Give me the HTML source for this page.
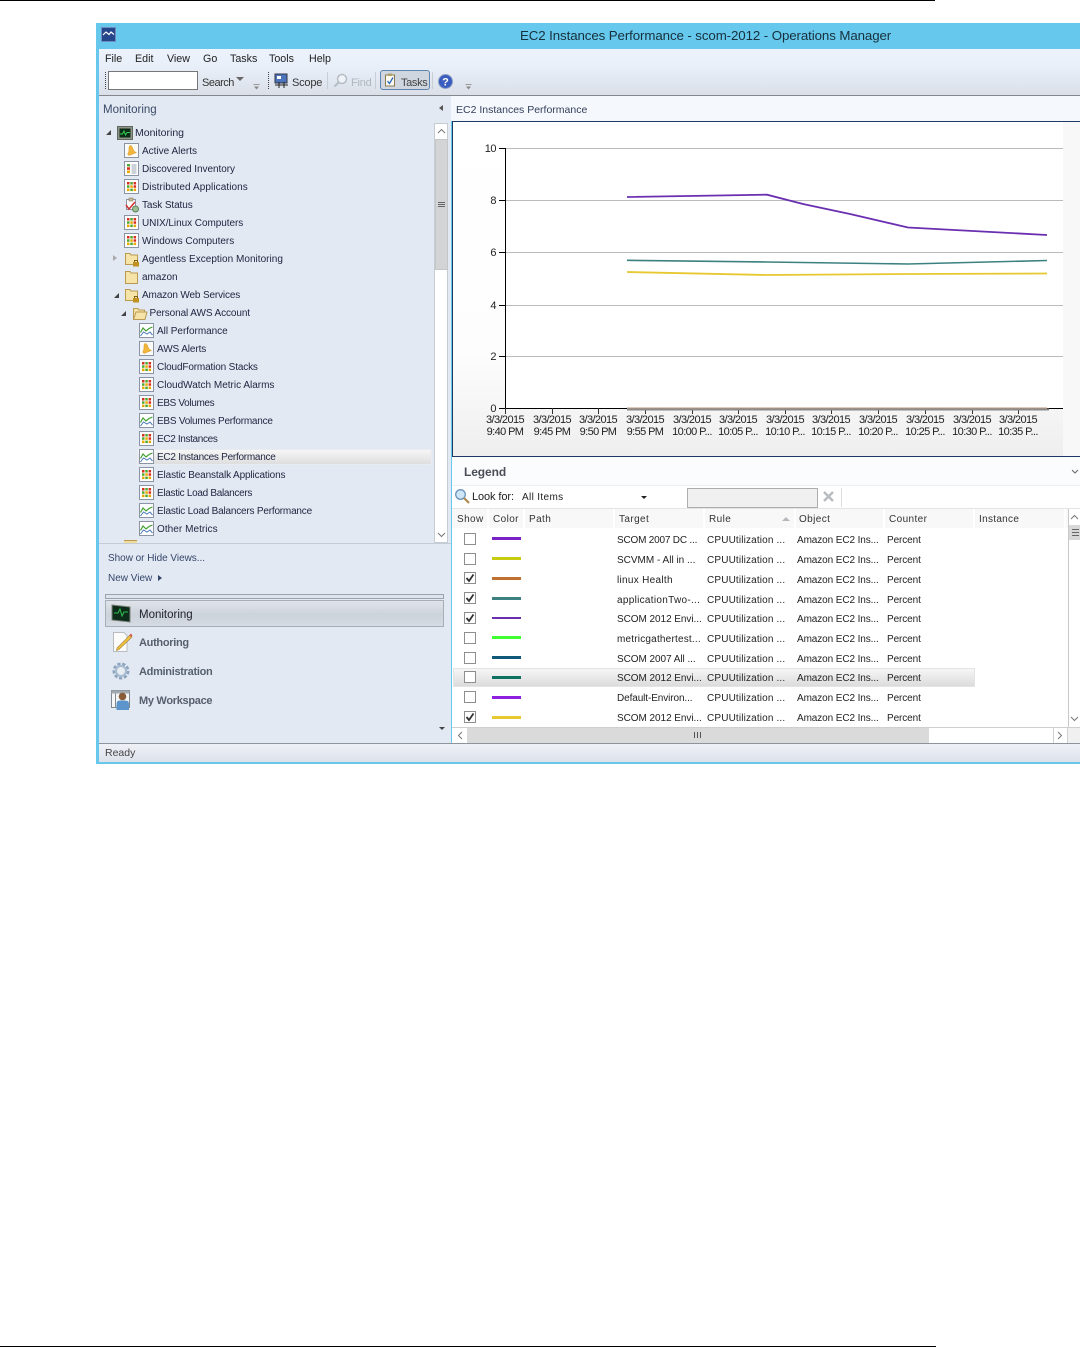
<!DOCTYPE html>
<html><head><meta charset="utf-8"><title>EC2 Instances Performance</title>
<style>
html,body{margin:0;padding:0;background:#fff}
body{position:relative;width:1080px;height:1347px;overflow:hidden;font-family:"Liberation Sans",sans-serif;font-size:10px;color:#1e2440}
div,span,svg.a{position:absolute}
.t{line-height:14px;height:14px;white-space:nowrap}
svg.i{position:absolute;width:16px;height:16px}
.m{color:#222;font-size:10.700px;top:52px;line-height:14px}
.h{top:513px;line-height:14px;color:#333;font-size:10px;letter-spacing:.4px}
.c{line-height:14px;white-space:nowrap;color:#222;font-size:10px}
.r{left:707px;letter-spacing:.15px}
.o{left:797px;letter-spacing:-.1px}
.p{left:887px;letter-spacing:-.1px}
.g{left:617px}
.cb{left:464px;width:10px;height:10px;border:1px solid #8e8e8e;background:#fff}
.sw{left:492px;width:29px;height:3px}
.hd{top:509px;height:19px;background:#f8f8f8}
.wb{left:139px;font-size:11px;font-weight:bold;color:#56606e;letter-spacing:-.3px}
</style></head><body>
<svg width="0" height="0" style="position:absolute"><defs>
<symbol id="grid" viewBox="0 0 16 16"><rect x=".5" y=".5" width="14" height="14" fill="#fff" stroke="#8a94a4"/><g fill="#e8a800"><rect x="3" y="3" width="2.500" height="2.500" fill="#d83020"/><rect x="6.300" y="3" width="2.500" height="2.500" fill="#50a830"/><rect x="9.600" y="3" width="2.500" height="2.500" fill="#d83020"/><rect x="3" y="6.300" width="2.500" height="2.500" fill="#50a830"/><rect x="6.300" y="6.300" width="2.500" height="2.500"/><rect x="9.600" y="6.300" width="2.500" height="2.500" fill="#d83020"/><rect x="3" y="9.600" width="2.500" height="2.500"/><rect x="6.300" y="9.600" width="2.500" height="2.500" fill="#50a830"/><rect x="9.600" y="9.600" width="2.500" height="2.500"/></g></symbol>
<symbol id="list" viewBox="0 0 16 16"><rect x=".5" y=".5" width="14" height="14" fill="#fff" stroke="#8a94a4"/><rect x="3" y="3" width="3" height="2.500" fill="#50a830"/><rect x="3" y="6.300" width="3" height="2.500" fill="#d83020"/><rect x="3" y="9.600" width="3" height="2.500" fill="#e8a800"/><path d="M7.500 4h5M7.500 6h5M7.500 8h5M7.500 10h5M7.500 12h5" stroke="#9aa4b4"/></symbol>
<symbol id="alert" viewBox="0 0 16 16"><rect x=".5" y=".5" width="14" height="14" fill="#fbfbf8" stroke="#8a94a4"/><path d="M6 2.500C7.500 2.500 8.500 4 9 6C9.500 8 11 9 12.500 9.500L5 12.500L3.500 11C5 9.500 5 7 5 5C5 3.500 5.300 2.800 6 2.500Z" fill="#f2b63c" stroke="#d89020" stroke-width=".5"/></symbol>
<symbol id="perf" viewBox="0 0 16 16"><rect x=".5" y=".5" width="14" height="14" fill="#fff" stroke="#8a94a4"/><path d="M1.500 9.500 L4 5 L7 8 L10 5.500 L13.500 4" fill="none" stroke="#40a030" stroke-width="1.200"/><path d="M1.500 13 L4.500 9 L8 11 L11 9 L13.500 12" fill="none" stroke="#4878b8"/></symbol>
<symbol id="folder" viewBox="0 0 16 16"><path d="M1.500 14.500V2.500H6L7 4H13.500V14.500Z" fill="#f6e3a8" stroke="#b89a50"/></symbol>
<symbol id="lock" viewBox="0 0 16 16"><path d="M1.500 13.500V2.500H6L7 4H13.500V13.500Z" fill="#f6e3a8" stroke="#b89a50"/><rect x="9" y="11" width="6" height="4.500" fill="#c09020"/><path d="M10.500 11V9.500H13.500V11" fill="none" stroke="#806010"/></symbol>
<symbol id="open" viewBox="0 0 16 16"><path d="M1.500 14.500V3.500H6L7 5H12.500V7H15L13 14.500Z" fill="#f6e3a8" stroke="#b89a50"/><path d="M1.500 14.500L4 7H15" fill="none" stroke="#b89a50"/></symbol>
<symbol id="task" viewBox="0 0 16 16"><rect x="2.500" y="2.500" width="9" height="10" fill="#fff" stroke="#8a94a4"/><rect x="5" y="1" width="4" height="3" fill="#c8b898" stroke="#807050" stroke-width=".5"/><path d="M2 8L5 12L11 5" fill="none" stroke="#d03030" stroke-width="1.500"/><circle cx="11.500" cy="12" r="3" fill="#9cc090" stroke="#608060"/></symbol>
<symbol id="mon" viewBox="0 0 16 16"><rect x=".5" y="1.500" width="15" height="13" fill="#8e9488" stroke="#606860"/><rect x="2.500" y="3.500" width="11" height="9" fill="#0c2c18"/><path d="M3 9H5.500L7 6L8.500 10L10 7.500H13" fill="none" stroke="#30d050"/></symbol>
<symbol id="more" viewBox="0 0 7 7"><path d="M.5 1.500H6.500" stroke="#999"/><path d="M1 3.500H6L3.500 6.500Z" fill="#888"/></symbol>
</defs></svg>

<!-- page rules -->
<div style="left:0;top:0;width:935px;height:1px;background:#000"></div>
<div style="left:0;top:1346px;width:936px;height:1px;background:#000"></div>

<!-- window -->
<div style="left:96px;top:23px;width:984px;height:741px;background:#66c8ec"></div>
<div style="left:99px;top:49px;width:981px;height:46px;background:linear-gradient(#edf3fc,#e9eff9 40%,#dadfe8)"></div>
<div style="left:99px;top:95px;width:981px;height:1px;background:#84888e"></div>

<!-- title -->
<svg class="a" style="left:101px;top:27px" width="15" height="15" viewBox="0 0 15 15"><rect width="15" height="15" fill="#26468c"/><rect x=".5" y=".5" width="14" height="14" fill="none" stroke="#6f8cc0"/><path d="M2 8L5 5L8 7.500L10 5L13 7.500" fill="none" stroke="#fff" stroke-width="1.200"/></svg>
<div class="t" style="left:520px;top:28px;line-height:16px;height:16px;font-size:13.300px;color:#16303c;letter-spacing:-.1px">EC2 Instances Performance - scom-2012 - Operations Manager</div>

<!-- menu -->
<div class="m" style="left:105px">File</div>
<div class="m" style="left:135px">Edit</div>
<div class="m" style="left:167px">View</div>
<div class="m" style="left:203px">Go</div>
<div class="m" style="left:230px">Tasks</div>
<div class="m" style="left:269px">Tools</div>
<div class="m" style="left:309px">Help</div>

<!-- toolbar -->
<div style="left:105px;top:72px;width:1px;height:17px;border-left:1px dotted #444"></div>
<div style="left:108px;top:71px;width:88px;height:17px;background:#fff;border:1px solid #777"></div>
<div class="t" style="left:202px;top:76px;font-size:11px;color:#333;letter-spacing:-.5px">Search</div>
<div style="left:236px;top:77px;border:4px solid transparent;border-top:4px solid #666;border-bottom:0"></div>
<svg class="a" style="left:253px;top:83px" width="7" height="7"><use href="#more"/></svg>
<div style="left:268px;top:72px;width:1px;height:17px;border-left:1px dotted #444"></div>
<svg class="a" style="left:274px;top:73px" width="15" height="15" viewBox="0 0 15 15"><rect x="1" y="1" width="12" height="9" fill="#4c74bc" stroke="#334"/><rect x="3" y="3" width="4" height="3" fill="#fff"/><path d="M1 12H14M5 9V15M10 9V15" stroke="#222"/></svg>
<div class="t" style="left:292px;top:76px;font-size:11px;color:#333;letter-spacing:-.2px">Scope</div>
<div style="left:327px;top:72px;width:1px;height:17px;background:#c8ced6"></div>
<svg class="a" style="left:333px;top:73px" width="15" height="15" viewBox="0 0 15 15"><circle cx="9" cy="6" r="4.500" fill="#f0f4f8" stroke="#b4bcc4" stroke-width="1.500"/><path d="M5.500 9.500L1.500 13.500" stroke="#b4bcc4" stroke-width="2"/></svg>
<div class="t" style="left:351px;top:76px;font-size:11px;color:#b0b6bc;letter-spacing:-.2px">Find</div>
<div style="left:375px;top:72px;width:1px;height:17px;background:#c8ced6"></div>
<div style="left:380px;top:70px;width:48px;height:18px;background:#cfd6df;border:1px solid #5f86ae;border-radius:3px"></div>
<svg class="a" style="left:384px;top:73px" width="13" height="14" viewBox="0 0 13 14"><rect x="1.500" y="2" width="9" height="11" fill="#fdfbf0" stroke="#8a7a50"/><rect x="4" y=".5" width="4" height="2.500" fill="#b0a070"/><path d="M3.500 8L5.500 10.500L9 4.500" fill="none" stroke="#2868c0" stroke-width="1.300"/></svg>
<div class="t" style="left:401px;top:76px;font-size:11px;color:#444;letter-spacing:-.35px">Tasks</div>
<div style="left:432px;top:72px;width:1px;height:17px;background:#c8ced6"></div>
<svg class="a" style="left:438px;top:74px" width="15" height="15" viewBox="0 0 15 15"><circle cx="7.500" cy="7.500" r="7" fill="#3a5cc0" stroke="#8ca0c0"/><text x="7.500" y="11.500" text-anchor="middle" font-size="11" font-weight="bold" fill="#fff" font-family="Liberation Sans">?</text></svg>
<svg class="a" style="left:465px;top:83px" width="7" height="7"><use href="#more"/></svg>

<!-- left pane -->
<div style="left:99px;top:96px;width:352px;height:647px;background:#e3e9f2"></div>
<div class="t" style="left:103px;top:103px;font-size:11.500px;color:#3a4a68">Monitoring</div>
<div style="left:439px;top:105px;border:3.500px solid transparent;border-right:4px solid #555;border-left:0"></div>
<!-- tree scrollbar -->
<div style="left:434px;top:123px;width:14px;height:420px;background:#fff;border:1px solid #c6ccd4;box-sizing:border-box"></div>
<div style="left:435px;top:139px;width:13px;height:131px;background:#d2d4d6;border:1px solid #c4c6c8;box-sizing:border-box"></div>
<div style="left:438px;top:202px;width:7px;height:5px;border-top:1px solid #666;border-bottom:1px solid #666;box-sizing:border-box"></div>
<div style="left:438px;top:204px;width:7px;height:1px;background:#666"></div>
<svg class="a" style="left:437px;top:128px" width="9" height="6"><path d="M1 5L4.500 1.500L8 5" fill="none" stroke="#777"/></svg>
<svg class="a" style="left:437px;top:532px" width="9" height="6"><path d="M1 1L4.500 4.500L8 1" fill="none" stroke="#777"/></svg>

<!-- tree -->
<div style="left:106px;top:130px;border-bottom:5px solid #444;border-left:5px solid transparent"></div>
<svg class="i" style="left:117px;top:125px"><use href="#mon"/></svg><div class="t" style="left:135px;top:126px;font-size:10.500px">Monitoring</div>
<svg class="i" style="left:124px;top:143px"><use href="#alert"/></svg><div class="t" style="left:142px;top:145px">Active Alerts</div>
<svg class="i" style="left:124px;top:161px"><use href="#list"/></svg><div class="t" style="left:142px;top:163px;letter-spacing:-.05px">Discovered Inventory</div>
<svg class="i" style="left:124px;top:179px"><use href="#grid"/></svg><div class="t" style="left:142px;top:181px;letter-spacing:.08px">Distributed Applications</div>
<svg class="i" style="left:124px;top:197px"><use href="#task"/></svg><div class="t" style="left:142px;top:199px;letter-spacing:-.1px">Task Status</div>
<svg class="i" style="left:124px;top:215px"><use href="#grid"/></svg><div class="t" style="left:142px;top:217px;letter-spacing:-.05px">UNIX/Linux Computers</div>
<svg class="i" style="left:124px;top:233px"><use href="#grid"/></svg><div class="t" style="left:142px;top:235px">Windows Computers</div>
<div style="left:113px;top:255px;border:3.500px solid transparent;border-left:4px solid #aaa;border-right:0"></div>
<svg class="i" style="left:124px;top:251px"><use href="#lock"/></svg><div class="t" style="left:142px;top:253px;letter-spacing:.03px">Agentless Exception Monitoring</div>
<svg class="i" style="left:124px;top:269px"><use href="#folder"/></svg><div class="t" style="left:142px;top:271px">amazon</div>
<div style="left:114px;top:293px;border-bottom:5px solid #444;border-left:5px solid transparent"></div>
<svg class="i" style="left:124px;top:287px"><use href="#lock"/></svg><div class="t" style="left:142px;top:289px;letter-spacing:-.15px">Amazon Web Services</div>
<div style="left:121px;top:311px;border-bottom:5px solid #444;border-left:5px solid transparent"></div>
<svg class="i" style="left:132px;top:305px"><use href="#open"/></svg><div class="t" style="left:149.500px;top:307px;letter-spacing:-.1px">Personal AWS Account</div>
<svg class="i" style="left:139px;top:323px"><use href="#perf"/></svg><div class="t" style="left:157px;top:325px;letter-spacing:-.03px">All Performance</div>
<svg class="i" style="left:139px;top:341px"><use href="#alert"/></svg><div class="t" style="left:157px;top:343px;letter-spacing:-.1px">AWS Alerts</div>
<svg class="i" style="left:139px;top:359px"><use href="#grid"/></svg><div class="t" style="left:157px;top:361px;letter-spacing:-.15px">CloudFormation Stacks</div>
<svg class="i" style="left:139px;top:377px"><use href="#grid"/></svg><div class="t" style="left:157px;top:379px">CloudWatch Metric Alarms</div>
<svg class="i" style="left:139px;top:395px"><use href="#grid"/></svg><div class="t" style="left:157px;top:397px;letter-spacing:-.35px">EBS Volumes</div>
<svg class="i" style="left:139px;top:413px"><use href="#perf"/></svg><div class="t" style="left:157px;top:415px;letter-spacing:-.24px">EBS Volumes Performance</div>
<svg class="i" style="left:139px;top:431px"><use href="#grid"/></svg><div class="t" style="left:157px;top:433px;letter-spacing:-.35px">EC2 Instances</div>
<div style="left:137px;top:449px;width:295px;height:16px;background:linear-gradient(#f6f6f6,#dedede);border:1px solid #e8ecf0;box-sizing:border-box;border-radius:2px"></div>
<svg class="i" style="left:139px;top:449px"><use href="#perf"/></svg><div class="t" style="left:157px;top:451px;letter-spacing:-.26px">EC2 Instances Performance</div>
<svg class="i" style="left:139px;top:467px"><use href="#grid"/></svg><div class="t" style="left:157px;top:469px;letter-spacing:-.13px">Elastic Beanstalk Applications</div>
<svg class="i" style="left:139px;top:485px"><use href="#grid"/></svg><div class="t" style="left:157px;top:487px;letter-spacing:-.3px">Elastic Load Balancers</div>
<svg class="i" style="left:139px;top:503px"><use href="#perf"/></svg><div class="t" style="left:157px;top:505px;letter-spacing:-.2px">Elastic Load Balancers Performance</div>
<svg class="i" style="left:139px;top:521px"><use href="#perf"/></svg><div class="t" style="left:157px;top:523px;letter-spacing:.05px">Other Metrics</div>
<div style="left:124px;top:540px;width:13px;height:3px;background:#f0dc9c;border-top:1px solid #b89a50;box-sizing:border-box"></div>

<div style="left:99px;top:543px;width:352px;height:1px;background:#c4ccd8"></div>
<div class="t" style="left:108px;top:552px;color:#34466c;letter-spacing:-.03px">Show or Hide Views...</div>
<div class="t" style="left:108px;top:572px;color:#34466c">New View</div>
<div style="left:158px;top:575px;border:3px solid transparent;border-left:4px solid #34466c;border-right:0"></div>

<!-- wunderbar -->
<div style="left:105px;top:594px;width:339px;height:5px;background:#dfe4ec;border:1px solid #9aa2ac;box-sizing:border-box"></div>
<div style="left:105px;top:600px;width:339px;height:27px;background:linear-gradient(#e0e4ea,#cdd3db 55%,#d6dbe3);border:1px solid #a6aeb8;box-sizing:border-box"></div>
<svg class="a" style="left:111px;top:604px" width="20" height="19" viewBox="0 0 20 19"><path d="M1 1L19 3V18L1 16Z" fill="#0d2c1a" stroke="#7a8278"/><path d="M3 9H7L9 5L11 12L13 8H17" fill="none" stroke="#30c050"/></svg>
<div class="t" style="left:139px;top:608px;font-size:11.500px;color:#20242c">Monitoring</div>
<svg class="a" style="left:111px;top:631px" width="22" height="22" viewBox="0 0 22 22"><path d="M2.500 1.500H13L16 4.500V20.500H2.500Z" fill="#fcfcfa" stroke="#b8bcc0"/><path d="M6 17L19 4L21 6L8 18.500L5.500 19.500Z" fill="#f0c040" stroke="#a08030" stroke-width=".6"/><path d="M18 4.500L20 2.500L21.500 4.500L20 6Z" fill="#d06050"/></svg>
<div class="t wb" style="top:636px">Authoring</div>
<svg class="a" style="left:111px;top:660px" width="20" height="22" viewBox="0 0 20 22"><circle cx="10" cy="11" r="6.500" fill="none" stroke="#8ea6c0" stroke-width="4" stroke-dasharray="3 1.500"/><circle cx="10" cy="11" r="5" fill="none" stroke="#a8bccf" stroke-width="2"/><circle cx="10" cy="11" r="3.200" fill="#e8edf3"/></svg>
<div class="t wb" style="top:665px">Administration</div>
<svg class="a" style="left:111px;top:689px" width="22" height="22" viewBox="0 0 22 22"><rect x=".5" y="1.500" width="18" height="17" fill="#f4f6f8" stroke="#808890"/><rect x=".5" y="1.500" width="18" height="3" fill="#a0a8b0"/><rect x="4" y="4.500" width="1" height="14" fill="#808890"/><circle cx="11.500" cy="7.500" r="3.800" fill="#8a5c38"/><path d="M5.500 21V15Q5.500 11.500 9 11.500H14Q18 11.500 18 15V21Z" fill="#5c94cc"/></svg>
<div class="t wb" style="top:694px">My Workspace</div>
<div style="left:439px;top:727px;border:3.500px solid transparent;border-top:3.500px solid #444;border-bottom:0"></div>

<!-- status -->
<div style="left:99px;top:743px;width:981px;height:19px;background:linear-gradient(#eef1f6,#dde2ea);border-top:1px solid #8f949a;box-sizing:border-box"></div>
<div class="t" style="left:105px;top:746px;font-size:10.500px;color:#444">Ready</div>

<!-- right header -->
<div style="left:451px;top:96px;width:629px;height:25px;background:#f5f8fc"></div>
<div class="t" style="left:456px;top:103px;font-size:10.500px;color:#34405c">EC2 Instances Performance</div>

<!-- chart -->
<svg class="a" style="left:452px;top:121px" width="628" height="336" viewBox="452 121 628 336" font-family="Liberation Sans" font-size="11" fill="#222">
<defs><linearGradient id="bg" x1="0" y1="0" x2="0" y2="1"><stop offset="0" stop-color="#fff"/><stop offset=".7" stop-color="#fdfdfd"/><stop offset="1" stop-color="#eeeeee"/></linearGradient></defs>
<rect x="452" y="121" width="628" height="336" fill="url(#bg)"/>
<rect x="1063" y="122" width="17" height="334" fill="#f8f8f8"/>
<rect x="505" y="135" width="558" height="273" fill="#fff"/>
<path d="M452.500 457V121.500H1080M452 456.500H1080" fill="none" stroke="#1d3a66"/>
<path d="M505 148.500H1063M505 200.500H1063M505 252.500H1063M505 305.500H1063M505 356.500H1063" stroke="#bbb"/>
<path d="M505.500 148V408M499 148.500H505M499 200.500H505M499 252.500H505M499 305.500H505M499 356.500H505M499 408.500H1063" stroke="#000" fill="none"/>
<path d="M505.500 408V414M552.500 408V414M598.500 408V414M645.500 408V414M692.500 408V414M738.500 408V414M785.500 408V414M831.500 408V414M878.500 408V414M925.500 408V414M972.500 408V414M1018.500 408V414" stroke="#333"/>
<path d="M627 409.500H1049" stroke="#8a8a8a" stroke-width="2"/>
<path d="M627 408H1047" stroke="#b89880" stroke-width="1"/>
<polyline points="627,197 767,194.700 803,204 850,214 908,227.500 1047,235" fill="none" stroke="#6a2fb0" stroke-width="1.800"/>
<polyline points="627,260.300 767,262 908,264 1047,260.500" fill="none" stroke="#3d8080" stroke-width="1.600"/>
<polyline points="627,272 767,275 908,274 1047,273.500" fill="none" stroke="#e8c830" stroke-width="1.800"/>
<g text-anchor="end" letter-spacing="-.5"><text x="496" y="152">10</text><text x="496" y="204">8</text><text x="496" y="256">6</text><text x="496" y="309">4</text><text x="496" y="360">2</text><text x="496" y="412">0</text></g>
<g text-anchor="middle" letter-spacing="-.6">
<text x="505" y="423">3/3/2015</text><text x="505" y="435">9:40 PM</text>
<text x="552" y="423">3/3/2015</text><text x="552" y="435">9:45 PM</text>
<text x="598" y="423">3/3/2015</text><text x="598" y="435">9:50 PM</text>
<text x="645" y="423">3/3/2015</text><text x="645" y="435">9:55 PM</text>
<text x="692" y="423">3/3/2015</text><text x="692" y="435">10:00 P...</text>
<text x="738" y="423">3/3/2015</text><text x="738" y="435">10:05 P...</text>
<text x="785" y="423">3/3/2015</text><text x="785" y="435">10:10 P...</text>
<text x="831" y="423">3/3/2015</text><text x="831" y="435">10:15 P...</text>
<text x="878" y="423">3/3/2015</text><text x="878" y="435">10:20 P...</text>
<text x="925" y="423">3/3/2015</text><text x="925" y="435">10:25 P...</text>
<text x="972" y="423">3/3/2015</text><text x="972" y="435">10:30 P...</text>
<text x="1018" y="423">3/3/2015</text><text x="1018" y="435">10:35 P...</text>
</g></svg>

<!-- legend -->
<div style="left:452px;top:457px;width:628px;height:270px;background:#fff"></div>
<div style="left:452px;top:457px;width:628px;height:29px;background:#fbfcfd;border-bottom:1px solid #eceef0;box-sizing:border-box"></div>
<div class="t" style="left:464px;top:465px;font-size:12px;font-weight:bold;color:#4a4e58;letter-spacing:-.1px">Legend</div>
<svg class="a" style="left:1071px;top:469px" width="8" height="6"><path d="M1 1L4 4L7 1" fill="none" stroke="#666"/></svg>
<svg class="a" style="left:454px;top:488px" width="16" height="16" viewBox="0 0 16 16"><circle cx="6.500" cy="6.500" r="4.800" fill="#cfe6f8" stroke="#6a94b8" stroke-width="1.300"/><path d="M10 10L15 15" stroke="#b08a50" stroke-width="2.200"/></svg>
<div class="t" style="left:472px;top:490px;font-size:11px;color:#222;letter-spacing:-.1px">Look for:</div>
<div class="t" style="left:522px;top:491px;font-size:10px;color:#222;letter-spacing:.35px">All Items</div>
<div style="left:641px;top:496px;border:3px solid transparent;border-top:3px solid #222;border-bottom:0"></div>
<div style="left:687px;top:488px;width:131px;height:20px;background:#f0f0f0;border:1px solid #adadad;box-sizing:border-box"></div>
<svg class="a" style="left:822px;top:490px" width="13" height="13"><path d="M2 2L11 11M11 2L2 11" stroke="#b8bcc0" stroke-width="2.500"/></svg>
<div style="left:841px;top:488px;width:1px;height:19px;background:#dcdcdc"></div>

<div style="left:452px;top:508px;width:628px;height:1px;background:#e4e4e4"></div>
<div class="hd" style="left:452px;width:35px"></div><div class="hd" style="left:489px;width:34px"></div><div class="hd" style="left:525px;width:88px"></div><div class="hd" style="left:615px;width:88px"></div><div class="hd" style="left:705px;width:89px"></div><div class="hd" style="left:796px;width:87px"></div><div class="hd" style="left:885px;width:88px"></div><div class="hd" style="left:975px;width:89px"></div><div class="hd" style="left:1066px;width:2px"></div>
<div class="h" style="left:457px">Show</div><div class="h" style="left:493px">Color</div><div class="h" style="left:529px">Path</div><div class="h" style="left:619px">Target</div><div class="h" style="left:709px">Rule</div><div class="h" style="left:799px">Object</div><div class="h" style="left:889px">Counter</div><div class="h" style="left:979px;letter-spacing:.3px">Instance</div>
<div style="left:782px;top:517px;border:4.500px solid transparent;border-bottom:4px solid #b4b8bc;border-top:0"></div>

<!-- selected row -->
<div style="left:453px;top:668px;width:522px;height:19px;background:linear-gradient(#f6f6f6,#dcdcdc);border:1px solid #e4e4e4;box-sizing:border-box"></div>

<!-- rows -->
<div class="cb" style="top:533px"></div><div class="sw" style="top:537px;background:#7a22c4"></div>
<div class="c g" style="top:534px;letter-spacing:-.2px">SCOM 2007 DC ...</div><div class="c r" style="top:534px">CPUUtilization ...</div><div class="c o" style="top:534px">Amazon EC2 Ins...</div><div class="c p" style="top:534px">Percent</div>
<div class="cb" style="top:553px"></div><div class="sw" style="top:557px;background:#c8cc10"></div>
<div class="c g" style="top:554px">SCVMM - All in ...</div><div class="c r" style="top:554px">CPUUtilization ...</div><div class="c o" style="top:554px">Amazon EC2 Ins...</div><div class="c p" style="top:554px">Percent</div>
<div class="cb" style="top:572px"></div><div class="sw" style="top:577px;background:#c07030"></div>
<div class="c g" style="top:574px;letter-spacing:.3px">linux Health</div><div class="c r" style="top:574px">CPUUtilization ...</div><div class="c o" style="top:574px">Amazon EC2 Ins...</div><div class="c p" style="top:574px">Percent</div>
<div class="cb" style="top:592px"></div><div class="sw" style="top:597px;background:#3d8080"></div>
<div class="c g" style="top:594px;letter-spacing:.3px">applicationTwo-...</div><div class="c r" style="top:594px">CPUUtilization ...</div><div class="c o" style="top:594px">Amazon EC2 Ins...</div><div class="c p" style="top:594px">Percent</div>
<div class="cb" style="top:612px"></div><div class="sw" style="top:617px;height:2px;background:#6a2fb0"></div>
<div class="c g" style="top:613px;letter-spacing:-.05px">SCOM 2012 Envi...</div><div class="c r" style="top:613px">CPUUtilization ...</div><div class="c o" style="top:613px">Amazon EC2 Ins...</div><div class="c p" style="top:613px">Percent</div>
<div class="cb" style="top:632px"></div><div class="sw" style="top:636px;background:#40ff30"></div>
<div class="c g" style="top:633px;letter-spacing:.2px">metricgathertest...</div><div class="c r" style="top:633px">CPUUtilization ...</div><div class="c o" style="top:633px">Amazon EC2 Ins...</div><div class="c p" style="top:633px">Percent</div>
<div class="cb" style="top:652px"></div><div class="sw" style="top:656px;background:#105878"></div>
<div class="c g" style="top:653px;letter-spacing:-.05px">SCOM 2007 All ...</div><div class="c r" style="top:653px">CPUUtilization ...</div><div class="c o" style="top:653px">Amazon EC2 Ins...</div><div class="c p" style="top:653px">Percent</div>
<div class="cb" style="top:671px"></div><div class="sw" style="top:676px;background:#107060"></div>
<div class="c g" style="top:672px;letter-spacing:-.05px">SCOM 2012 Envi...</div><div class="c r" style="top:672px">CPUUtilization ...</div><div class="c o" style="top:672px">Amazon EC2 Ins...</div><div class="c p" style="top:672px">Percent</div>
<div class="cb" style="top:691px"></div><div class="sw" style="top:696px;background:#9020e0"></div>
<div class="c g" style="top:692px;letter-spacing:-.1px">Default-Environ...</div><div class="c r" style="top:692px">CPUUtilization ...</div><div class="c o" style="top:692px">Amazon EC2 Ins...</div><div class="c p" style="top:692px">Percent</div>
<div class="cb" style="top:711px"></div><div class="sw" style="top:716px;background:#e8c830"></div>
<div class="c g" style="top:712px;letter-spacing:-.05px">SCOM 2012 Envi...</div><div class="c r" style="top:712px">CPUUtilization ...</div><div class="c o" style="top:712px">Amazon EC2 Ins...</div><div class="c p" style="top:712px">Percent</div>

<!-- check marks -->
<svg class="a" style="left:464px;top:533px" width="12" height="200" fill="none" stroke="#333" stroke-width="1.800"><path d="M2.500 45L5 48L9.500 41.500M2.500 65L5 68L9.500 61.500M2.500 85L5 88L9.500 81.500M2.500 184L5 187L9.500 180.500"/></svg>

<!-- vertical scrollbar -->
<div style="left:1068px;top:509px;width:12px;height:218px;background:#fff;border-left:1px solid #c8c8c8;box-sizing:border-box"></div>
<svg class="a" style="left:1070px;top:514px" width="9" height="6"><path d="M1 5L4.500 1.500L8 5" fill="none" stroke="#777"/></svg>
<div style="left:1069px;top:525px;width:11px;height:15px;background:#d8d8d8"></div>
<div style="left:1072px;top:529px;width:7px;height:7px;border-top:1px solid #666;border-bottom:1px solid #666;box-sizing:border-box"></div>
<div style="left:1072px;top:532px;width:7px;height:1px;background:#666"></div>
<svg class="a" style="left:1070px;top:716px" width="9" height="6"><path d="M1 1L4.500 4.500L8 1" fill="none" stroke="#777"/></svg>

<!-- horizontal scrollbar -->
<div style="left:452px;top:727px;width:628px;height:16px;background:#fff;border-top:1px solid #cfcfcf;box-sizing:border-box"></div>
<div style="left:467px;top:728px;width:462px;height:15px;background:#dadada"></div>
<div style="left:694px;top:732px;width:7px;height:6px;border-left:1px solid #555;border-right:1px solid #555;box-sizing:border-box"></div>
<div style="left:697px;top:732px;width:1px;height:6px;background:#555"></div>
<svg class="a" style="left:457px;top:731px" width="6" height="9"><path d="M5 1L1.500 4.500L5 8" fill="none" stroke="#777"/></svg>
<svg class="a" style="left:1057px;top:731px" width="6" height="9"><path d="M1 1L4.500 4.500L1 8" fill="none" stroke="#777"/></svg>
<div style="left:1053px;top:728px;width:1px;height:15px;background:#d0d0d0"></div>
<div style="left:1067px;top:728px;width:1px;height:15px;background:#d0d0d0"></div>
<div style="left:1068px;top:728px;width:12px;height:15px;background:#f0f0f0"></div>

</body></html>
